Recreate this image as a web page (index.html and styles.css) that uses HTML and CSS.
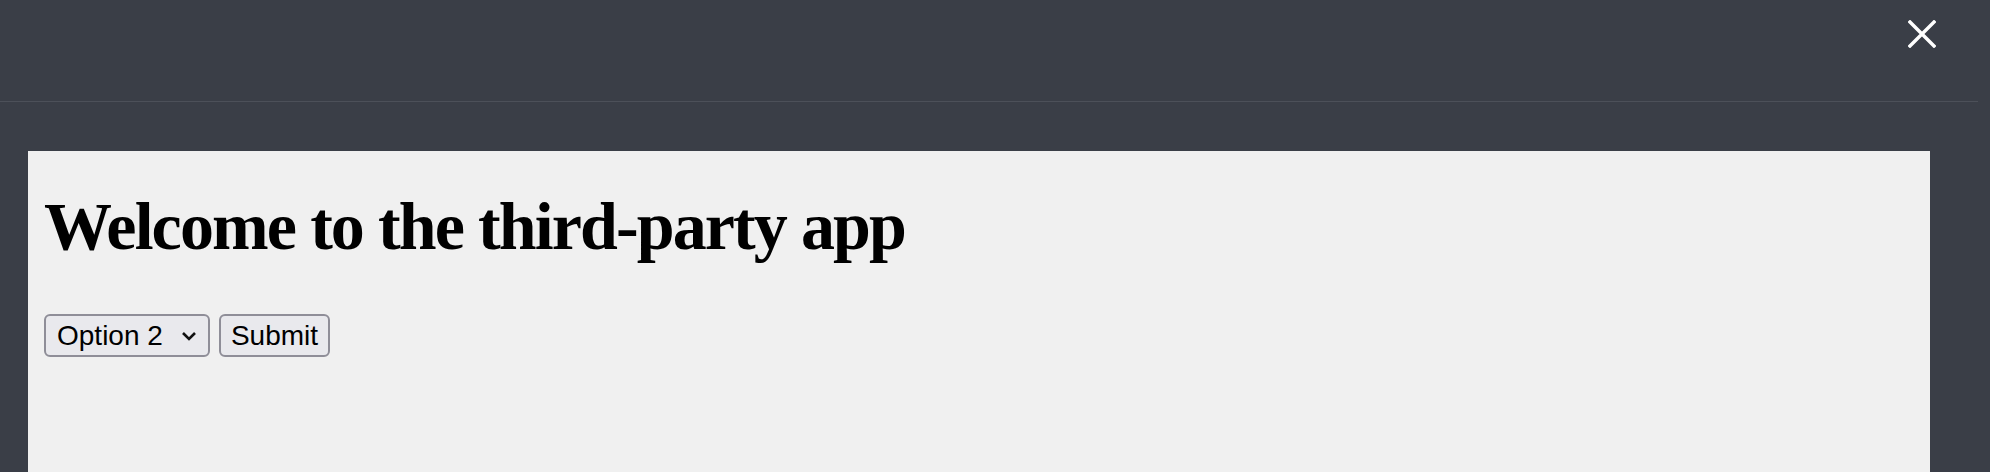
FILE: index.html
```html
<!DOCTYPE html>
<html lang="en">
<head>
    <meta charset="UTF-8">
    <meta name="viewport" content="width=device-width, initial-scale=1.0">
    <title>Third-party app</title>
    <link rel="stylesheet" href="styles.css">
</head>
<body>
    <header class="topbar">
        <button class="close-btn" aria-label="Close">
            <svg width="28" height="28" viewBox="0 0 28 28">
                <path d="M2 2 L26 26 M26 2 L2 26" stroke="#ffffff" stroke-width="3.4" stroke-linecap="square" fill="none"/>
            </svg>
        </button>
    </header>
    <main class="frame-area">
        <div class="app-frame">
            <h1>Welcome to the third-party app</h1>
            <form class="app-form">
                <span class="select-wrap">
                    <select class="app-select">
                        <option>Option 1</option>
                        <option selected>Option 2</option>
                        <option>Option 3</option>
                    </select>
                    <svg class="chevron" width="16" height="10" viewBox="0 0 16 10">
                        <path d="M2 2 L8 8 L14 2" stroke="#111111" stroke-width="2.6" fill="none"/>
                    </svg>
                </span>
                <button type="button" class="app-button">Submit</button>
            </form>
        </div>
    </main>
</body>
</html>
```

FILE: styles.css
```css
body {
    background-color: #3a3e47;
    margin: 0;
    height: 472px;
    overflow: hidden;
}
.topbar {
    display: flex;
    justify-content: flex-end;
    align-items: flex-start;
    height: 102px;
    width: 1978px;
    box-sizing: border-box;
    padding: 20px 42px 0 0;
    border-bottom: 1px solid #4c5059;
}
.close-btn {
    background: none;
    border: none;
    padding: 0;
    width: 28px;
    height: 28px;
    cursor: pointer;
}
.close-btn svg {
    display: block;
}
.frame-area {
    padding: 49px 0 0 28px;
}
.app-frame {
    width: 1902px;
    height: 321px;
    box-sizing: border-box;
    background-color: #f0f0f0;
    padding: 36px 17px 0 16px;
}
h1 {
    font-family: "Liberation Serif", "Times New Roman", serif;
    font-weight: bold;
    font-size: 68px;
    letter-spacing: -1.9px;
    color: #000000;
    margin: 0 0 48px 0;
    line-height: normal;
}
.app-form {
    display: flex;
    align-items: center;
    gap: 9px;
}
.select-wrap {
    position: relative;
    display: inline-block;
}
.app-select,
.app-button {
    font-family: "Liberation Sans", Arial, sans-serif;
    font-size: 28px;
    color: #000000;
    background-color: #e9e9ed;
    border: 2px solid #8f8e98;
    border-radius: 6px;
    height: 43px;
    box-sizing: border-box;
}
.app-select {
    appearance: none;
    -webkit-appearance: none;
    width: 166px;
    padding: 0 0 0 11px;
}
.chevron {
    position: absolute;
    left: 137px;
    top: 17px;
    pointer-events: none;
}
.app-button {
    width: 111px;
    padding: 0;
}
```
